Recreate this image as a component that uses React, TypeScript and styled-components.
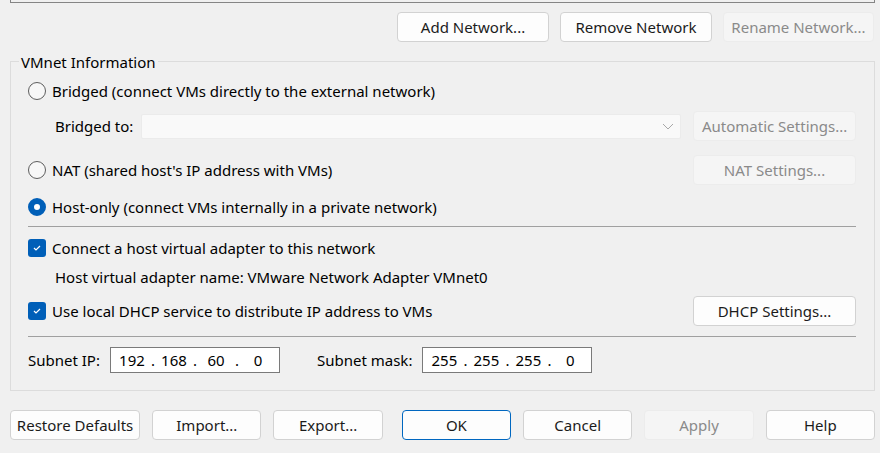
import styled, { createGlobalStyle } from "styled-components";

const GlobalStyle = createGlobalStyle`
  html, body {
    margin: 0;
    padding: 0;
    background: #f0f0f0;
  }
  body {
    font-family: "Noto Sans", "Liberation Sans", sans-serif;
    font-size: 15px;
    color: #000;
  }
`;

const Dialog = styled.div`
  width: 880px;
  height: 453px;
  box-sizing: border-box;
  padding: 0 5px 0 10px;
  display: flex;
  flex-direction: column;
`;

const ListEdge = styled.div`
  height: 2px;
  border: 1px solid #858585;
  border-top: none;
  background: #f0f0f0;
`;

const Toolbar = styled.div`
  display: flex;
  justify-content: flex-end;
  gap: 11px;
  margin-top: 9px;
  padding-right: 1px;
`;

const Button = styled.button<{ $w: number; $primary?: boolean }>`
  width: ${(p) => p.$w}px;
  height: 30px;
  box-sizing: border-box;
  font-family: inherit;
  font-size: 15px;
  color: ${(p) => (p.disabled ? "#8a8a8a" : "#1b1b1b")};
  background: ${(p) => (p.disabled ? "#f5f5f5" : "#fdfdfd")};
  border: 1px solid
    ${(p) => (p.$primary ? "#0067c0" : p.disabled ? "#ececec" : "#d2d2d2")};
  border-radius: 4px;
  padding: 0;
  white-space: nowrap;
`;

const GroupBox = styled.div`
  position: relative;
  margin-top: 19px;
  border: 1px solid #dcdcdc;
  padding: 14px 18px 7px 17px;
  display: flex;
  flex-direction: column;
`;

const Legend = styled.span`
  position: absolute;
  top: -9px;
  left: 8px;
  padding: 0 2px;
  background: #f0f0f0;
  line-height: 18px;
`;

const Row = styled.div<{ $h: number }>`
  height: ${(p) => p.$h}px;
  display: flex;
  align-items: center;
`;

const IndentRow = styled(Row)`
  padding-left: 27px;
`;

const Choice = styled.label`
  display: flex;
  align-items: center;
  gap: 6px;
  white-space: nowrap;
`;

const RadioMark = styled.span<{ $on?: boolean }>`
  width: 18px;
  height: 18px;
  box-sizing: border-box;
  border-radius: 50%;
  border: ${(p) => (p.$on ? "6px solid #005fb8" : "1px solid #5d5d5d")};
  background: ${(p) => (p.$on ? "#fff" : "#f7f7f7")};
`;

const CheckMark = styled.span`
  width: 18px;
  height: 18px;
  border-radius: 3px;
  background: #005fb8;
  display: flex;
  align-items: center;
  justify-content: center;
`;

const BridgeLabel = styled.span`
  width: 86px;
`;

const Combo = styled.div`
  width: 541px;
  height: 25px;
  box-sizing: border-box;
  background: #f9f9f9;
  border: 1px solid #ebebeb;
  border-radius: 2px;
  display: flex;
  align-items: center;
  justify-content: flex-end;
  padding-right: 6px;
`;

const RightButton = styled(Button)`
  margin-left: auto;
`;

const SideGap = styled.div`
  width: 12px;
`;

const Separator = styled.hr`
  margin: 0;
  border: none;
  border-top: 1px solid #a0a0a0;
  height: 0;
`;

const SubnetLabel = styled.span<{ $gap: number }>`
  margin-left: ${(p) => p.$gap}px;
  margin-right: 10px;
`;

const IpBox = styled.div`
  width: 170px;
  height: 26px;
  box-sizing: border-box;
  background: #fff;
  border: 1px solid #7a7a7a;
  padding-left: 5px;
  display: flex;
  align-items: center;
`;

const IpCell = styled.span`
  width: 32px;
  text-align: center;
`;

const IpDot = styled.span`
  width: 10px;
  text-align: center;
`;

const Footer = styled.div`
  display: flex;
  gap: 12px;
  margin-top: 19px;
`;

const FooterSplit = styled.div`
  width: 7px;
  margin-left: -12px;
`;

function Chevron() {
  return (
    <svg width="12" height="7" viewBox="0 0 12 7">
      <path d="M1 1 L6 6 L11 1" fill="none" stroke="#a8a8a8" strokeWidth="1" />
    </svg>
  );
}

function Tick() {
  return (
    <svg width="10" height="8" viewBox="0 0 10 8">
      <path d="M2 4 L4 6 L8 2" fill="none" stroke="#fff" strokeWidth="1.2" />
    </svg>
  );
}

function IpField({ parts }: { parts: string[] }) {
  return (
    <IpBox>
      {parts.map((p, i) => (
        <>
          {i > 0 && <IpDot key={"d" + i}>.</IpDot>}
          <IpCell key={"c" + i}>{p}</IpCell>
        </>
      ))}
    </IpBox>
  );
}

export default function App() {
  return (
    <>
      <GlobalStyle />
      <Dialog>
        <ListEdge />
        <Toolbar>
          <Button $w={152}>Add Network...</Button>
          <Button $w={152}>Remove Network</Button>
          <Button $w={151} disabled>
            Rename Network...
          </Button>
        </Toolbar>

        <GroupBox>
          <Legend>VMnet Information</Legend>
          <Row $h={30}>
            <Choice>
              <RadioMark />
              Bridged (connect VMs directly to the external network)
            </Choice>
          </Row>
          <IndentRow $h={40}>
            <BridgeLabel>Bridged to:</BridgeLabel>
            <Combo>
              <Chevron />
            </Combo>
            <SideGap />
            <Button $w={163} disabled>
              Automatic Settings...
            </Button>
          </IndentRow>
          <Row $h={48}>
            <Choice>
              <RadioMark />
              NAT (shared host's IP address with VMs)
            </Choice>
            <RightButton $w={163} disabled>
              NAT Settings...
            </RightButton>
          </Row>
          <Row $h={26}>
            <Choice>
              <RadioMark $on />
              Host-only (connect VMs internally in a private network)
            </Choice>
          </Row>
          <Row $h={6} />
          <Separator />
          <Row $h={42}>
            <Choice>
              <CheckMark>
                <Tick />
              </CheckMark>
              Connect a host virtual adapter to this network
            </Choice>
          </Row>
          <IndentRow $h={16}>
            Host virtual adapter name: VMware Network Adapter VMnet0
          </IndentRow>
          <Row $h={51}>
            <Choice>
              <CheckMark>
                <Tick />
              </CheckMark>
              Use local DHCP service to distribute IP address to VMs
            </Choice>
            <RightButton $w={163}>DHCP Settings...</RightButton>
          </Row>
          <Separator />
          <Row $h={46}>
            <SubnetLabel $gap={0}>Subnet IP:</SubnetLabel>
            <IpField parts={["192", "168", "60", "0"]} />
            <SubnetLabel $gap={37}>Subnet mask:</SubnetLabel>
            <IpField parts={["255", "255", "255", "0"]} />
          </Row>
        </GroupBox>

        <Footer>
          <Button $w={131}>Restore Defaults</Button>
          <Button $w={110}>Import...</Button>
          <Button $w={110}>Export...</Button>
          <FooterSplit />
          <Button $w={110} $primary>
            OK
          </Button>
          <Button $w={110}>Cancel</Button>
          <Button $w={110} disabled>
            Apply
          </Button>
          <Button $w={110}>Help</Button>
        </Footer>
      </Dialog>
    </>
  );
}
